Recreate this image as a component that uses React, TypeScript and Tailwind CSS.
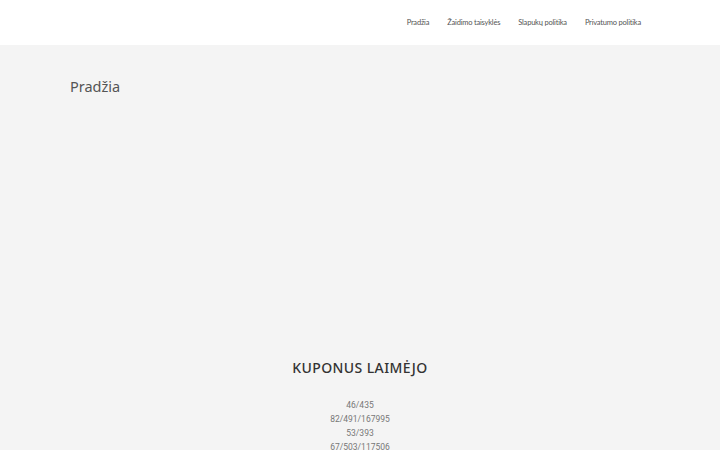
export default function App() {
  const nums = ["46/435", "82/491/167995", "53/393", "67/503/117506"];
  return (
    <div className="h-[450px] overflow-hidden bg-[#f4f4f4] font-['Noto_Sans',sans-serif]">
      <header className="h-[45px] bg-white">
        <div className="mx-auto flex h-full w-[600px] items-center justify-end pr-[19px]">
          <nav className="flex items-center gap-[18px] text-[7.5px] tracking-[-0.2px] text-[#555] font-['Lato',sans-serif]">
            <a>Pradžia</a>
            <a>Žaidimo taisyklės</a>
            <a>Slapukų politika</a>
            <a>Privatumo politika</a>
          </nav>
        </div>
      </header>
      <main className="mx-auto w-[580px]">
        <h1 className="pt-[31px] text-[14.5px] leading-[20px] text-[#555]">Pradžia</h1>
        <div className="h-[262px]" />
        <h2 className="text-center text-[14px] leading-[20px] font-medium tracking-[0.4px] text-[#333]">KUPONUS LAIMĖJO</h2>
        <div className="mt-[20px] flex flex-col items-center text-[8.5px] leading-[14px] text-[#777] font-['Roboto',sans-serif]">
          {nums.map((n) => (
            <div key={n}>{n}</div>
          ))}
        </div>
      </main>
    </div>
  );
}
